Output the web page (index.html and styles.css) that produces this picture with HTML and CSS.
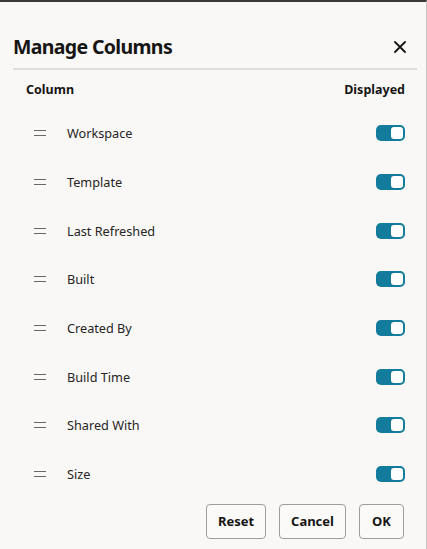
FILE: index.html
```html
<!DOCTYPE html>
<html lang="en">
<head>
<meta charset="utf-8">
<title>Manage Columns</title>
<link rel="stylesheet" href="styles.css">
</head>
<body>
<div class="dialog">
  <div class="dialog-header">
    <h1 class="dialog-title">Manage Columns</h1>
    <button class="close-btn" aria-label="Close">
      <svg width="12" height="12" viewBox="0 0 12 12"><path d="M1 1 L11 11 M11 1 L1 11" stroke="#161513" stroke-width="1.8" stroke-linecap="round" fill="none"/></svg>
    </button>
  </div>
  <div class="list">
    <div class="list-head">
      <span>Column</span>
      <span>Displayed</span>
    </div>
    <div class="row"><span class="handle"></span><span class="label">Workspace</span><span class="toggle"><span class="knob"></span></span></div>
    <div class="row"><span class="handle"></span><span class="label">Template</span><span class="toggle"><span class="knob"></span></span></div>
    <div class="row"><span class="handle"></span><span class="label">Last Refreshed</span><span class="toggle"><span class="knob"></span></span></div>
    <div class="row"><span class="handle"></span><span class="label">Built</span><span class="toggle"><span class="knob"></span></span></div>
    <div class="row"><span class="handle"></span><span class="label">Created By</span><span class="toggle"><span class="knob"></span></span></div>
    <div class="row"><span class="handle"></span><span class="label">Build Time</span><span class="toggle"><span class="knob"></span></span></div>
    <div class="row"><span class="handle"></span><span class="label">Shared With</span><span class="toggle"><span class="knob"></span></span></div>
    <div class="row"><span class="handle"></span><span class="label">Size</span><span class="toggle"><span class="knob"></span></span></div>
  </div>
  <div class="footer">
    <button class="btn btn-reset">Reset</button>
    <button class="btn btn-cancel">Cancel</button>
    <button class="btn btn-ok">OK</button>
  </div>
</div>
</body>
</html>
```
FILE: styles.css
```css
* { box-sizing: border-box; }
html, body {
  margin: 0;
  padding: 0;
  background: #f9f8f7;
}
body {
  font-family: "Noto Sans", "Open Sans", sans-serif;
  color: #161513;
  height: 549px;
  overflow: hidden;
}
.dialog {
  border-top: 2px solid #3a3a3a;
  border-right: 1px solid #c8c6c4;
  height: 549px;
}
.dialog-header {
  margin: 0 9px 0 13px;
  padding: 32px 0 8px;
  display: flex;
  align-items: center;
  justify-content: space-between;
  border-bottom: 2px solid #e0dedc;
}
.dialog-title {
  margin: 0;
  font-size: 19.5px;
  line-height: 26px;
  font-weight: 700;
  letter-spacing: -0.65px;
}
.close-btn {
  border: 0;
  background: none;
  padding: 0;
  margin-right: 11px;
  width: 12px;
  height: 12px;
  display: flex;
}
.list {
  padding: 0 21px 0 26px;
}
.list-head {
  height: 39px;
  display: flex;
  align-items: center;
  justify-content: space-between;
  font-size: 12.5px;
  font-weight: 700;
}
.row {
  height: 48.7px;
  display: flex;
  align-items: center;
  font-size: 12.7px;
  color: #262523;
}
.handle {
  width: 12px;
  height: 6px;
  margin-left: 8px;
  margin-right: 21px;
  border-top: 1.5px solid #6a6866;
  border-bottom: 1.5px solid #6a6866;
}
.label {
  flex: 1;
}
.toggle {
  width: 29px;
  height: 16px;
  border-radius: 5px;
  background: #137b9b;
  display: flex;
  align-items: center;
  justify-content: flex-end;
  padding-right: 2px;
}
.knob {
  width: 12px;
  height: 12px;
  border-radius: 3px;
  background: #ffffff;
}
.footer {
  display: flex;
  justify-content: flex-end;
  gap: 13px;
  padding: 5px 22px 0 0;
}
.btn {
  height: 35px;
  border: 1px solid #9f9d9b;
  border-radius: 4px;
  background: #fbfaf9;
  font-family: "Noto Sans", "Open Sans", sans-serif;
  font-size: 13px;
  font-weight: 700;
  color: #161513;
  padding: 0;
}
.btn-reset { width: 60px; }
.btn-cancel { width: 67px; }
.btn-ok { width: 45px; }
```
